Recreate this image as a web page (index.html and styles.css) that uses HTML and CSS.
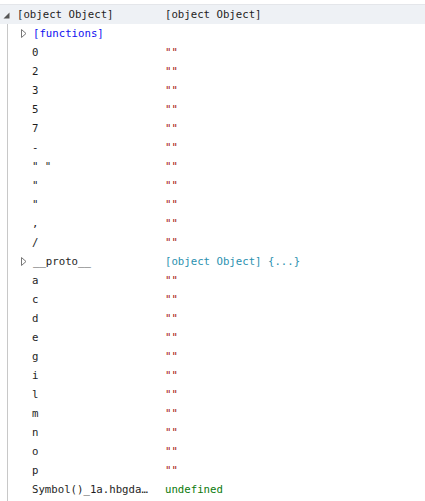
FILE: index.html
```html
<!DOCTYPE html>
<html>
<head>
<meta charset="utf-8">
<link rel="stylesheet" href="styles.css">
</head>
<body>
<div class="tree">
  <div class="row head">
    <div class="key"><svg class="tri-open" width="7" height="7" viewBox="0 0 7 7"><polygon points="6.5,0.5 6.5,6.5 0.5,6.5" fill="#555"/></svg><span>[object Object]</span></div>
    <div class="val head-val">[object Object]</div>
  </div>
  <div class="body">
    <div class="row">
      <div class="key exp"><svg class="tri" width="6" height="9" viewBox="0 0 6 9"><polygon points="0.5,0.5 5,4.5 0.5,8.5" fill="none" stroke="#777" stroke-width="1"/></svg><span class="fn">[functions]</span></div>
      <div class="val"></div>
    </div>
    <div class="row"><div class="key">0</div><div class="val str">""</div></div>
    <div class="row"><div class="key">2</div><div class="val str">""</div></div>
    <div class="row"><div class="key">3</div><div class="val str">""</div></div>
    <div class="row"><div class="key">5</div><div class="val str">""</div></div>
    <div class="row"><div class="key">7</div><div class="val str">""</div></div>
    <div class="row"><div class="key">-</div><div class="val str">""</div></div>
    <div class="row"><div class="key">" "</div><div class="val str">""</div></div>
    <div class="row"><div class="key">"</div><div class="val str">""</div></div>
    <div class="row"><div class="key">"</div><div class="val str">""</div></div>
    <div class="row"><div class="key">,</div><div class="val str">""</div></div>
    <div class="row"><div class="key">/</div><div class="val str">""</div></div>
    <div class="row">
      <div class="key exp"><svg class="tri" width="6" height="9" viewBox="0 0 6 9"><polygon points="0.5,0.5 5,4.5 0.5,8.5" fill="none" stroke="#777" stroke-width="1"/></svg><span>__proto__</span></div>
      <div class="val obj">[object Object] {...}</div>
    </div>
    <div class="row"><div class="key">a</div><div class="val str">""</div></div>
    <div class="row"><div class="key">c</div><div class="val str">""</div></div>
    <div class="row"><div class="key">d</div><div class="val str">""</div></div>
    <div class="row"><div class="key">e</div><div class="val str">""</div></div>
    <div class="row"><div class="key">g</div><div class="val str">""</div></div>
    <div class="row"><div class="key">i</div><div class="val str">""</div></div>
    <div class="row"><div class="key">l</div><div class="val str">""</div></div>
    <div class="row"><div class="key">m</div><div class="val str">""</div></div>
    <div class="row"><div class="key">n</div><div class="val str">""</div></div>
    <div class="row"><div class="key">o</div><div class="val str">""</div></div>
    <div class="row"><div class="key">p</div><div class="val str">""</div></div>
    <div class="row"><div class="key trunc">Symbol()_1a.hbgdaddd</div><div class="val undef">undefined</div></div>
  </div>
</div>
</body>
</html>
```

FILE: styles.css
```css
html, body {
  margin: 0;
  padding: 0;
  background: #ffffff;
}
body {
  font-family: "DejaVu Sans Mono", "Liberation Mono", monospace;
  font-size: 10.7px;
  color: #1e1e1e;
  padding-top: 4px;
}
.tree {
  width: 425px;
}
.row {
  display: grid;
  grid-template-columns: 165px 1fr;
  height: 19px;
  line-height: 19px;
  white-space: nowrap;
}
.head {
  background: #eef1f5;
  border-top: 1px solid #e4e6ea;
  height: 19px;
  line-height: 19px;
}
.head .key {
  padding-left: 3px;
  display: flex;
  align-items: center;
  gap: 7px;
}
.tri-open {
  display: block;
  margin-top: 1px;
}
.body {
  margin-left: 7px;
  border-left: 1px solid #c8c8c8;
  min-height: 480px;
}
.key {
  padding-left: 24px;
  overflow: hidden;
}
.val {
  margin-left: -8px;
}
.head .head-val {
  margin-left: 0;
}
.key.exp {
  padding-left: 13px;
  display: flex;
  align-items: center;
  gap: 6px;
}
.tri {
  display: block;
}
.trunc {
  text-overflow: ellipsis;
  padding-right: 23px;
}
.fn {
  color: #1010f0;
}
.str {
  color: #a31515;
}
.obj {
  color: #2b91af;
}
.undef {
  color: #0b7a0b;
}
```
